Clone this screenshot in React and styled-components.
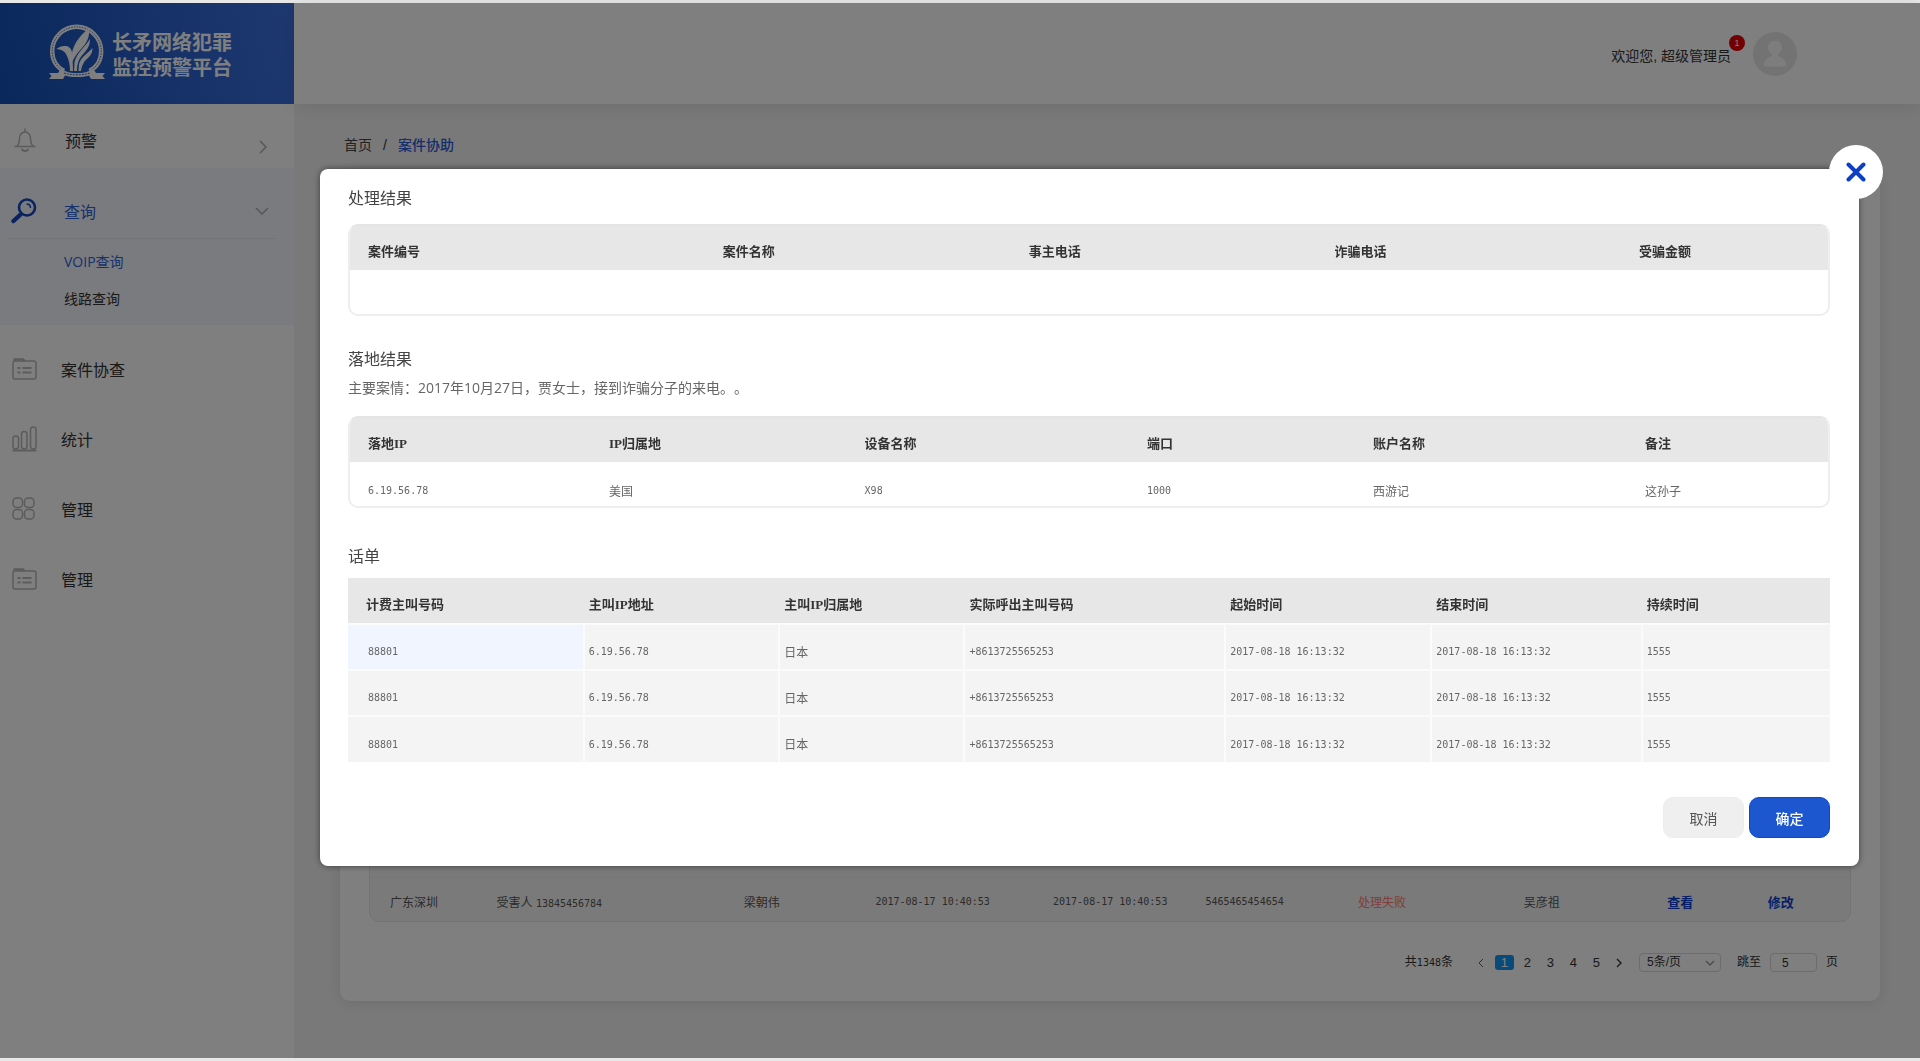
import { useState } from "react";
import styled, { createGlobalStyle } from "styled-components";

const GlobalStyle = createGlobalStyle`
  * {
    box-sizing: border-box;
  }

  body {
    margin: 0;
    background: #e8e8e8;
    color: #333;
    font-family: "Liberation Sans", "Noto Sans CJK SC", sans-serif;
    font-size: 14px;
    text-spacing-trim: space-all;
  }

  button,
  input,
  select {
    font-family: inherit;
    color: inherit;
  }
`;

const Page = styled.div`
  display: flex;
  min-height: 100vh;
  padding: 3px 0;
`;

/* ---------- sidebar ---------- */

const Sidebar = styled.aside`
  display: flex;
  flex-direction: column;
  flex: 0 0 294px;
  background: #fff;
`;

const Logo = styled.a`
  display: flex;
  align-items: center;
  gap: 7px;
  height: 101px;
  padding: 0 0 4px 49px;
  background: linear-gradient(75deg, #1550b8, #3c72e2);
  color: #fff;
  text-decoration: none;
  font-size: 20px;
  font-weight: 700;
  line-height: 25px;
`;

const LogoText = styled.span`
  padding-top: 8px;
`;

const MenuItem = styled.button`
  display: flex;
  align-items: center;
  width: 100%;
  height: ${(props) => props.$height || 70}px;
  padding: ${(props) => props.$padding || "0 22px 0 12px"};
  border: none;
  background: none;
  color: ${(props) => (props.$active ? "#2f62d9" : "#333")};
  font-size: 16px;
  text-align: left;
  cursor: pointer;
`;

const MenuIcon = styled.span`
  display: flex;
  flex: 0 0 ${(props) => props.$width || 49}px;
  color: ${(props) => (props.$active ? "#1546c0" : "#b8b8b8")};
`;

const MenuLabel = styled.span`
  flex: 1;
`;

const MenuArrow = styled.span`
  display: flex;
  align-self: ${(props) => props.$align || "center"};
  color: #b0b0b0;
`;

const ActiveGroup = styled.div`
  padding: 16px 0 8px;
  background: #f5f7fe;
`;

const ActiveHead = styled.div`
  margin: 0 17px 0 7px;
  border-bottom: 1px solid #e6e8ee;
`;

const SubMenu = styled.nav`
  display: flex;
  flex-direction: column;
  padding: 4px 0 0 64px;
`;

const SubLink = styled.a`
  color: ${(props) => (props.$active ? "#2f62d9" : "#333")};
  font-family: "Open Sans", "Noto Sans CJK SC", sans-serif;
  font-size: 14px;
  line-height: 37px;
  text-decoration: none;
`;

const MenuRest = styled.nav`
  padding-top: 9px;
`;

/* ---------- main area ---------- */

const Main = styled.div`
  display: flex;
  flex: 1;
  flex-direction: column;
  min-width: 0;
`;

const Header = styled.header`
  display: flex;
  align-items: center;
  justify-content: flex-end;
  gap: 22px;
  height: 101px;
  padding-right: 123px;
  background: #fff;
  box-shadow: 0 2px 20px rgba(0, 0, 0, 0.1);
  z-index: 1;
`;

const Welcome = styled.span`
  position: relative;
  padding-top: 5px;
  color: #333;
  line-height: 20px;
`;

const Badge = styled.span`
  position: absolute;
  top: -6px;
  right: -14px;
  width: 16px;
  height: 16px;
  border-radius: 50%;
  background: #e60000;
  color: #fff;
  font-size: 9px;
  line-height: 16px;
  text-align: center;
`;

const Content = styled.main`
  display: flex;
  flex: 1;
  flex-direction: column;
  padding: 31px 40px 57px 46px;
  background: #f3f3f3;
`;

const Breadcrumb = styled.nav`
  display: flex;
  gap: 11px;
  padding: 0 0 15px 4px;
  line-height: 20px;
`;

const Crumb = styled.a`
  color: ${(props) => (props.$active ? "#2a5bd7" : "#444")};
  font-weight: ${(props) => (props.$active ? 500 : 400)};
  text-decoration: none;
`;

const Card = styled.section`
  display: flex;
  flex: 1;
  flex-direction: column;
  padding: 29px;
  border-radius: 10px;
  background: #fff;
  box-shadow: 0 2px 16px rgba(0, 0, 0, 0.1);
`;

const CaseList = styled.div`
  display: flex;
  flex: 1;
  flex-direction: column;
  justify-content: flex-end;
  border: 1px solid #e6e6e6;
  border-radius: 10px;
  background: #f5f5f5;
`;

const CaseTable = styled.table`
  width: 100%;
  border-collapse: collapse;
  table-layout: fixed;
`;

const CaseCell = styled.td`
  height: 44px;
  padding: 4px 0 0 20px;
  border-top: 1px solid #ececec;
  color: ${(props) => props.$color || "#555"};
  font-size: 12px;
  white-space: nowrap;
`;

const RowLink = styled.a`
  color: #0d3fd0;
  font-size: 13px;
  font-weight: 700;
  text-decoration: none;
`;

const Num = styled.span`
  font-family: "DejaVu Sans Mono", monospace;
  font-size: 10px;
`;

const Pagination = styled.div`
  display: flex;
  align-items: center;
  justify-content: flex-end;
  margin-top: 31px;
  padding-right: 13px;
  font-size: 12px;
  line-height: 19px;
`;

const Pages = styled.div`
  display: flex;
  align-items: center;
  gap: 4px;
  margin: 0 10px 0 19px;
`;

const PageButton = styled.button`
  display: flex;
  align-items: center;
  justify-content: center;
  width: 19px;
  height: 15px;
  padding: 0;
  border: none;
  border-radius: 3px;
  background: ${(props) => (props.$active ? "#1595f5" : "none")};
  color: ${(props) => (props.$active ? "#fff" : "#333")};
  font-size: 13px;
  line-height: 15px;
  cursor: pointer;
`;

const SelectWrap = styled.span`
  position: relative;
  display: flex;
  margin-right: 16px;

  svg {
    position: absolute;
    top: 4px;
    right: 5px;
    color: #999;
    pointer-events: none;
  }
`;

const PageSize = styled.select`
  width: 82px;
  height: 19px;
  padding: 0 0 0 7px;
  border: 1px solid #d9d9d9;
  border-radius: 4px;
  background: none;
  font-size: 12px;
  line-height: 17px;
  appearance: none;
`;

const JumpLabel = styled.label`
  display: flex;
  align-items: center;
  gap: 9px;
`;

const JumpInput = styled.input`
  width: 47px;
  height: 19px;
  padding: 0 0 0 11px;
  border: 1px solid #d9d9d9;
  border-radius: 4px;
  background: none;
  font-size: 12px;
`;

/* ---------- dialog ---------- */

const Overlay = styled.div`
  position: fixed;
  inset: 3px 0;
  z-index: 10;
  padding: 166px 61px 0 320px;
  background: rgba(0, 0, 0, 0.5);
`;

const Dialog = styled.div`
  position: relative;
  padding: 18px 29px 28px 28px;
  border-radius: 8px;
  background: #fff;
  box-shadow: 0 0 6px rgba(0, 0, 0, 0.5);
`;

const CloseButton = styled.button`
  position: absolute;
  top: -24px;
  right: -24px;
  display: flex;
  align-items: center;
  justify-content: center;
  width: 54px;
  height: 54px;
  padding: 0;
  border: none;
  border-radius: 50%;
  background: #fff;
  color: #0b3fc4;
  cursor: pointer;
`;

const Section = styled.section`
  margin-top: ${(props) => props.$top || 0}px;
`;

const SectionTitle = styled.h2`
  margin: 0 0 ${(props) => props.$gap}px;
  color: #444;
  font-size: 16px;
  font-weight: 400;
  line-height: 24px;
`;

const Summary = styled.p`
  margin: 0 0 18px;
  color: #666;
  font-family: "Open Sans", "Noto Sans CJK SC", sans-serif;
  font-size: 14px;
  line-height: 20px;
`;

const TableFrame = styled.div`
  overflow: hidden;
  border: 2px solid #eee;
  border-top-color: #e4e4e4;
  border-radius: 10px;
`;

const Table = styled.table`
  width: 100%;
  border-collapse: collapse;
  table-layout: fixed;
  text-align: left;
  white-space: nowrap;

  th {
    height: 44px;
    padding: 4px 0 0 18px;
    background: #e7e7e7;
    color: #333;
    font-family: "Liberation Serif", "Noto Sans CJK SC", serif;
    font-size: 13px;
    font-weight: 700;
  }

  td {
    height: 44px;
    padding: 12px 0 0 18px;
    color: #666;
    font-size: 12px;
  }
`;

const BillTable = styled(Table)`
  th {
    height: 46px;
    padding: 6px 0 0 5px;
  }

  td {
    height: 46px;
    padding: 8px 0 0 4px;
    border-top: 2px solid #fbfbfb;
    border-left: 2px solid #fbfbfb;
    background: #f4f4f4;
  }

  th:first-child {
    padding-left: 18px;
  }

  td:first-child {
    padding-left: 20px;
    border-left: none;
  }

  tbody tr:first-child td:first-child {
    background: #f0f5ff;
  }
`;

const Actions = styled.div`
  display: flex;
  justify-content: flex-end;
  gap: 5px;
  margin-top: 35px;
`;

const ActionButton = styled.button`
  width: 81px;
  height: 41px;
  padding: 0;
  border: 1px solid ${(props) => (props.$primary ? "#0f47c8" : "#ececec")};
  border-radius: 10px;
  background: ${(props) => (props.$primary ? "#1c57cf" : "#efefef")};
  color: ${(props) => (props.$primary ? "#fff" : "#555")};
  font-size: 14px;
  font-weight: ${(props) => (props.$primary ? 500 : 400)};
  cursor: pointer;
`;

/* ---------- icons ---------- */

const LogoMark = () => (
  <svg width="56" height="56" viewBox="0 0 56 56" fill="none">
    <path
      d="M15 47C7.500 43 3.200 36 3.200 27.300a24.500 24.500 0 0 1 49 0C52.200 36 48 43 40.500 47"
      stroke="#fff"
      strokeWidth="4.400"
    />
    <path
      d="M15 47C7.500 43 3.200 36 3.200 27.300a24.500 24.500 0 0 1 49 0C52.200 36 48 43 40.500 47"
      stroke="#3a69c4"
      strokeWidth="1"
      strokeDasharray="1.500 1.200"
    />
    <path d="M40.500 4C34 9 25 17 22.500 31l1 7c3-8 8-12 12-17 3-4 5-9 5-17z" fill="#fff" />
    <path d="M41 15c-4 7-13 13-15.500 23L25 47h3c0-9 3-14 8-19 3-4 5-7 5-13z" fill="#fff" />
    <path d="M43.500 24c-4 5-11 8-13.500 16l-.5 7h2.500c1-6 3-10 7-13 3-3 4.500-6 4.500-10z" fill="#fff" />
    <path
      d="M7.500 25c3-2.500 6-3.500 9.500-3 4 .500 6 4 6.500 9l.5 16h-3c0-6-1-12-4-17-1.500-3-5-4.500-9.500-5z"
      fill="#fff"
    />
    <path
      d="M12 44.500l4 2.500c7 3 17 3 24 0l4-2.500 3 4.500h9l-2.500 3 2.500 3H42l-2-3.500c-7 2-17 2-24 0L14 55H0l2.500-3L0 49h9z"
      fill="#fff"
    />
    <path
      d="M15 49c8 2.500 18 2.500 26 0"
      stroke="#3a69c4"
      strokeWidth="1"
      strokeDasharray="2 1"
    />
  </svg>
);

const BellIcon = () => (
  <svg
    width="26"
    height="26"
    viewBox="0 0 26 26"
    fill="none"
    stroke="currentColor"
    strokeWidth="1.500"
    strokeLinecap="round"
    strokeLinejoin="round"
  >
    <path d="M13 2v2.500M3 19.500h20M5 19c2-2 2.500-4 2.500-8a5.500 6 0 0 1 11 0c0 4 .5 6 2.500 8" />
    <path d="M10 22.500c1 2 5 2 6 0" strokeWidth="2" />
  </svg>
);

const SearchIcon = () => (
  <svg width="26" height="26" viewBox="0 0 26 26" fill="none" stroke="currentColor">
    <circle cx="16" cy="9.500" r="8" strokeWidth="2.600" />
    <path d="M15.500 6c2.500 0 4 1.500 4 4" strokeWidth="1.500" />
    <path d="M9 17l-6.500 6" strokeWidth="4.400" strokeLinecap="round" />
  </svg>
);

const FolderIcon = () => (
  <svg
    width="26"
    height="24"
    viewBox="0 0 26 24"
    fill="none"
    stroke="currentColor"
    strokeWidth="1.500"
  >
    <path d="M1 6a2 2 0 0 1 2-2h19a2 2 0 0 1 2 2v14a2 2 0 0 1-2 2H3a2 2 0 0 1-2-2z" />
    <path d="M1.500 2.500H11l1.500 1.500" strokeWidth="2.500" />
    <path d="M5.500 11h3M5.500 15.500h3M10.500 11h9M10.500 15.500h9" strokeWidth="2" />
  </svg>
);

const ChartIcon = () => (
  <svg
    width="26"
    height="26"
    viewBox="0 0 26 26"
    fill="none"
    stroke="currentColor"
    strokeWidth="1.500"
  >
    <rect x="1" y="10" width="5.500" height="13" rx="2.700" />
    <rect x="9.500" y="5.500" width="5.500" height="17.500" rx="2.700" />
    <rect x="18.500" y="1" width="5.500" height="22" rx="2.700" />
    <path d="M0.500 24.500h24" strokeWidth="2" />
  </svg>
);

const GridIcon = () => (
  <svg
    width="24"
    height="24"
    viewBox="0 0 24 24"
    fill="none"
    stroke="currentColor"
    strokeWidth="1.500"
  >
    <rect x="1" y="1" width="9.500" height="9.500" rx="3.500" />
    <rect x="12.500" y="1" width="9.500" height="9.500" rx="3.500" />
    <rect x="1" y="12.500" width="9.500" height="9.500" rx="3.500" />
    <rect x="12.500" y="12.500" width="9.500" height="9.500" rx="3.500" />
  </svg>
);

const Chevron = ({ d, size = 18, width = 1.6 }) => (
  <svg
    width={size}
    height={size}
    viewBox="0 0 18 18"
    fill="none"
    stroke="currentColor"
    strokeWidth={width}
  >
    <path d={d} />
  </svg>
);

const RIGHT = "M6 3l6 6-6 6";
const LEFT = "M12 3L6 9l6 6";
const DOWN = "M3 6l6 6 6-6";

const Avatar = () => (
  <svg width="44" height="44" viewBox="0 0 44 44">
    <circle cx="22" cy="22" r="22" fill="#e6e6e6" />
    <circle cx="22" cy="15.500" r="7" fill="#fbfbfb" />
    <path
      d="M19 20h6v3c0 2 7 3 8 8 .5 2 0 3.500-1.500 3.500h-19c-1.500 0-2-1.500-1.500-3.500 1-5 8-6 8-8z"
      fill="#fbfbfb"
    />
  </svg>
);

const CloseIcon = () => (
  <svg
    width="20"
    height="20"
    viewBox="0 0 20 20"
    fill="none"
    stroke="currentColor"
    strokeWidth="4"
    strokeLinecap="round"
  >
    <path d="M2.500 2.500l15 15M17.500 2.500l-15 15" />
  </svg>
);

/* ---------- data ---------- */

const caseColumns = [
  { title: "案件编号", width: "24%" },
  { title: "案件名称", width: "20.700%" },
  { title: "事主电话", width: "20.700%" },
  { title: "诈骗电话", width: "20.600%" },
  { title: "受骗金额", width: "14%" },
];

const ipColumns = [
  { title: "落地IP", width: "16.300%" },
  { title: "IP归属地", width: "17.300%" },
  { title: "设备名称", width: "19.100%" },
  { title: "端口", width: "15.300%" },
  { title: "账户名称", width: "18.400%" },
  { title: "备注", width: "13.600%" },
];

const billColumns = [
  { title: "计费主叫号码", width: "15.900%" },
  { title: "主叫IP地址", width: "13.200%" },
  { title: "主叫IP归属地", width: "12.500%" },
  { title: "实际呼出主叫号码", width: "17.600%" },
  { title: "起始时间", width: "13.900%" },
  { title: "结束时间", width: "14.200%" },
  { title: "持续时间", width: "12.700%" },
];

const bill = [
  "88801",
  "6.19.56.78",
  "日本",
  "+8613725565253",
  "2017-08-18 16:13:32",
  "2017-08-18 16:13:32",
  "1555",
];

const bills = [
  { id: 1, cells: bill },
  { id: 2, cells: bill },
  { id: 3, cells: bill },
];

const ipRow = ["6.19.56.78", "美国", "X98", "1000", "西游记", "这孙子"];

const caseWidths = [7.2, 16.7, 8.9, 12, 10.3, 10.3, 11.2, 9.7, 6.8, 6.9];

const menu = [
  { id: 1, label: "案件协查", Icon: FolderIcon },
  { id: 2, label: "统计", Icon: ChartIcon },
  { id: 3, label: "管理", Icon: GridIcon },
  { id: 4, label: "管理", Icon: FolderIcon },
];

// digits are set smaller than the Chinese text next to them
const renderCell = (text) => (/^[\x20-\x7e]+$/.test(text) ? <Num>{text}</Num> : text);

const Columns = ({ columns }) => (
  <>
    <colgroup>
      {columns.map((col) => (
        <col key={col.title} width={col.width} />
      ))}
    </colgroup>
    <thead>
      <tr>
        {columns.map((col) => (
          <th key={col.title} scope="col">
            {col.title}
          </th>
        ))}
      </tr>
    </thead>
  </>
);

const ResultDialog = ({ onClose }) => (
  <Overlay>
    <Dialog role="dialog" aria-modal="true" aria-label="案件协助">
      <CloseButton type="button" aria-label="关闭" onClick={onClose}>
        <CloseIcon />
      </CloseButton>

      <Section>
        <SectionTitle $gap={13}>处理结果</SectionTitle>
        <TableFrame>
          <Table>
            <Columns columns={caseColumns} />
            <tbody>
              <tr>
                <td colSpan={caseColumns.length} />
              </tr>
            </tbody>
          </Table>
        </TableFrame>
      </Section>

      <Section $top={32}>
        <SectionTitle $gap={6}>落地结果</SectionTitle>
        <Summary>主要案情：2017年10月27日，贾女士，接到诈骗分子的来电。。</Summary>
        <TableFrame>
          <Table>
            <Columns columns={ipColumns} />
            <tbody>
              <tr>
                {ipRow.map((text) => (
                  <td key={text}>{renderCell(text)}</td>
                ))}
              </tr>
            </tbody>
          </Table>
        </TableFrame>
      </Section>

      <Section $top={37}>
        <SectionTitle $gap={9}>话单</SectionTitle>
        <BillTable>
          <Columns columns={billColumns} />
          <tbody>
            {bills.map((row) => (
              <tr key={row.id}>
                {row.cells.map((text, i) => (
                  <td key={i}>{renderCell(text)}</td>
                ))}
              </tr>
            ))}
          </tbody>
        </BillTable>
      </Section>

      <Actions>
        <ActionButton type="button" onClick={onClose}>
          取消
        </ActionButton>
        <ActionButton type="button" $primary onClick={onClose}>
          确定
        </ActionButton>
      </Actions>
    </Dialog>
  </Overlay>
);

const App = () => {
  const [open, setOpen] = useState(true);
  const [page, setPage] = useState(1);
  const [jump, setJump] = useState("5");

  return (
    <>
      <GlobalStyle />
      <Page>
        <Sidebar>
          <Logo href="#">
            <LogoMark />
            <LogoText>
              长矛网络犯罪
              <br />
              监控预警平台
            </LogoText>
          </Logo>

          <MenuItem type="button" $height={64} $padding="20px 22px 12px 12px">
            <MenuIcon $width={53}>
              <BellIcon />
            </MenuIcon>
            <MenuLabel>预警</MenuLabel>
            <MenuArrow $align="flex-end">
              <Chevron d={RIGHT} />
            </MenuArrow>
          </MenuItem>

          <ActiveGroup>
            <ActiveHead>
              <MenuItem type="button" $active $height={54} $padding="0 6px 0 4px">
                <MenuIcon $width={53} $active>
                  <SearchIcon />
                </MenuIcon>
                <MenuLabel>查询</MenuLabel>
                <MenuArrow>
                  <Chevron d={DOWN} />
                </MenuArrow>
              </MenuItem>
            </ActiveHead>
            <SubMenu>
              <SubLink href="#" $active>
                VOIP查询
              </SubLink>
              <SubLink href="#">线路查询</SubLink>
            </SubMenu>
          </ActiveGroup>

          <MenuRest>
            {menu.map(({ id, label, Icon }) => (
              <MenuItem key={id} type="button">
                <MenuIcon>
                  <Icon />
                </MenuIcon>
                <MenuLabel>{label}</MenuLabel>
              </MenuItem>
            ))}
          </MenuRest>
        </Sidebar>

        <Main>
          <Header>
            <Welcome>
              欢迎您, 超级管理员
              <Badge>1</Badge>
            </Welcome>
            <Avatar />
          </Header>

          <Content>
            <Breadcrumb>
              <Crumb href="#">首页</Crumb>
              <span>/</span>
              <Crumb href="#" $active>
                案件协助
              </Crumb>
            </Breadcrumb>

            <Card>
              <CaseList>
                <CaseTable>
                  <colgroup>
                    {caseWidths.map((width, i) => (
                      <col key={i} width={`${width}%`} />
                    ))}
                  </colgroup>
                  <tbody>
                    <tr>
                      <CaseCell>广东深圳</CaseCell>
                      <CaseCell>
                        受害人 <Num>13845456784</Num>
                      </CaseCell>
                      <CaseCell>梁朝伟</CaseCell>
                      <CaseCell>
                        <Num>2017-08-17 10:40:53</Num>
                      </CaseCell>
                      <CaseCell>
                        <Num>2017-08-17 10:40:53</Num>
                      </CaseCell>
                      <CaseCell>
                        <Num>5465465454654</Num>
                      </CaseCell>
                      <CaseCell $color="#ff7a7a">处理失败</CaseCell>
                      <CaseCell>吴彦祖</CaseCell>
                      <CaseCell>
                        <RowLink
                          href="#"
                          onClick={(e) => {
                            e.preventDefault();
                            setOpen(true);
                          }}
                        >
                          查看
                        </RowLink>
                      </CaseCell>
                      <CaseCell>
                        <RowLink href="#">修改</RowLink>
                      </CaseCell>
                    </tr>
                  </tbody>
                </CaseTable>
              </CaseList>

              <Pagination>
                <span>
                  共<Num>1348</Num>条
                </span>
                <Pages>
                  <PageButton type="button" aria-label="上一页">
                    <Chevron d={LEFT} size={12} width={1.2} />
                  </PageButton>
                  {[1, 2, 3, 4, 5].map((n) => (
                    <PageButton
                      key={n}
                      type="button"
                      $active={n === page}
                      onClick={() => setPage(n)}
                    >
                      {n}
                    </PageButton>
                  ))}
                  <PageButton type="button" aria-label="下一页">
                    <Chevron d={RIGHT} size={12} width={2} />
                  </PageButton>
                </Pages>
                <SelectWrap>
                  <PageSize aria-label="每页条数" defaultValue="5">
                    <option value="5">5条/页</option>
                    <option value="10">10条/页</option>
                  </PageSize>
                  <Chevron d={DOWN} size={12} width={2} />
                </SelectWrap>
                <JumpLabel>
                  跳至
                  <JumpInput value={jump} onChange={(e) => setJump(e.target.value)} />
                  页
                </JumpLabel>
              </Pagination>
            </Card>
          </Content>
        </Main>
      </Page>

      {open && <ResultDialog onClose={() => setOpen(false)} />}
    </>
  );
};

export default App;
